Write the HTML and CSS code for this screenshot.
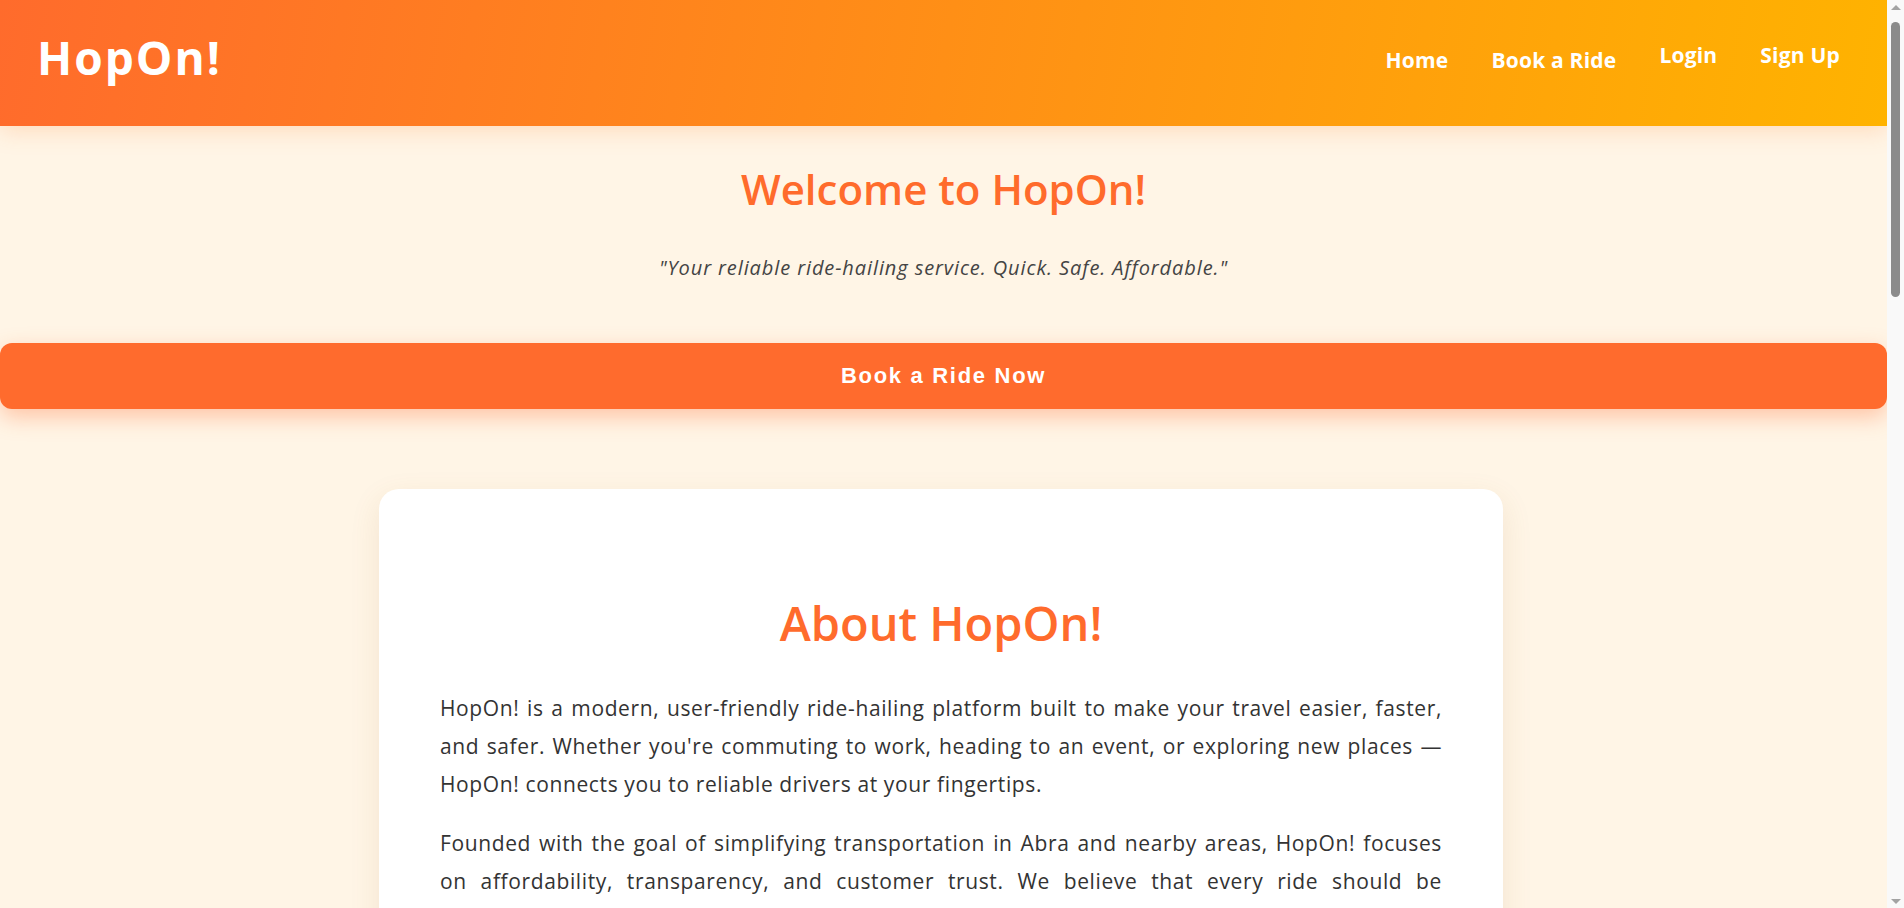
FILE: index.html
```html
<!DOCTYPE html>
<html lang="en">
<head>
<meta charset="utf-8">
<title>HopOn!</title>
<link rel="stylesheet" href="styles.css">
</head>
<body>
<header class="site-header">
  <div class="logo">HopOn!</div>
  <nav class="nav">
    <a class="nav-link" href="#">Home</a>
    <a class="nav-link" href="#">Book a Ride</a>
    <a class="nav-link nav-auth" href="#">Login</a>
    <a class="nav-link nav-auth" href="#">Sign Up</a>
  </nav>
</header>

<section class="hero">
  <h1 class="hero-title">Welcome to HopOn!</h1>
  <p class="hero-tagline">"Your reliable ride-hailing service. Quick. Safe. Affordable."</p>
  <button class="cta-button">Book a Ride Now</button>
</section>

<main class="about-wrap">
  <section class="about-card">
    <h2 class="about-title">About HopOn!</h2>
    <p class="about-text">HopOn! is a modern, user-friendly ride-hailing platform built to make your travel easier, faster, and safer. Whether you're commuting to work, heading to an event, or exploring new places — HopOn! connects you to reliable drivers at your fingertips.</p>
    <p class="about-text">Founded with the goal of simplifying transportation in Abra and nearby areas, HopOn! focuses on affordability, transparency, and customer trust. We believe that every ride should be comfortable, secure, and stress-free — from the moment you book until you arrive at your destination.</p>
    <p class="about-text">Our drivers are carefully verified and trained to provide friendly, professional service. With real-time booking, clear fare estimates, and easy account management, HopOn! puts you in control of every trip.</p>
    <p class="about-text">Join our growing community today and experience a smarter way to get around. HopOn! — your ride, your way.</p>
  </section>
</main>

<div class="scrollbar" aria-hidden="true">
  <div class="scroll-arrow scroll-up"></div>
  <div class="scroll-thumb"></div>
  <div class="scroll-spacer"></div>
  <div class="scroll-arrow scroll-down"></div>
</div>
</body>
</html>
```

FILE: styles.css
```css
* {
  box-sizing: border-box;
}

html, body {
  padding: 0;
}

html {
  margin: 0;
}

body {
  margin: 0 17px 0 0;
  background: #fff5e6;
  font-family: "Open Sans", "Noto Sans", sans-serif;
  color: #333;
}

.site-header {
  height: 126px;
  padding: 0 47px 0 37px;
  display: flex;
  align-items: center;
  justify-content: space-between;
  background: linear-gradient(100deg, #ff6b2c 0%, #ffb300 100%);
  box-shadow: 0 4px 22px rgba(255, 140, 60, 0.25);
  position: relative;
  z-index: 2;
}

.logo {
  color: #fff;
  font-size: 46px;
  font-weight: 700;
  line-height: 1.2;
  letter-spacing: 2px;
  margin-bottom: 10px;
}

.nav {
  display: flex;
  align-items: center;
  gap: 43px;
}

.nav-link {
  color: #fff;
  text-decoration: none;
  font-size: 21px;
  font-weight: 700;
  letter-spacing: 0.2px;
  line-height: 24px;
  margin-bottom: 6px;
}

.nav-link.nav-auth {
  margin-bottom: 16px;
}

.hero {
  text-align: center;
  padding-top: 38px;
}

.hero-title {
  margin: 0;
  color: #ff6b2c;
  font-size: 42px;
  font-weight: 600;
  line-height: 1.2;
}

.hero-tagline {
  margin: 40px 0 0;
  font-size: 20px;
  line-height: 28.5px;
  letter-spacing: 0.9px;
  font-style: italic;
  color: #444;
}

.cta-button {
  display: block;
  width: 100%;
  height: 66px;
  margin-top: 60px;
  border: none;
  border-radius: 12px;
  background: #ff6b2d;
  color: #fff;
  font-family: "Liberation Sans", Arial, sans-serif;
  font-size: 22px;
  font-weight: 700;
  letter-spacing: 1.7px;
  box-shadow: 0 8px 22px rgba(255, 107, 45, 0.35);
  cursor: pointer;
}

.about-wrap {
  display: flex;
  justify-content: center;
  padding: 80px 5px 60px 0;
}

.about-card {
  width: 1124px;
  background: #fff;
  border-radius: 20px;
  padding: 107px 61px 60px;
  box-shadow: 0 10px 30px rgba(160, 110, 40, 0.12);
}

.about-title {
  margin: 0 0 39px;
  text-align: center;
  color: #ff6b2c;
  font-size: 47px;
  font-weight: 600;
  line-height: 54px;
}

.about-text {
  margin: 0 0 21px;
  font-size: 21px;
  letter-spacing: 0.62px;
  line-height: 38px;
  text-align: justify;
  color: #333;
}

.scrollbar {
  position: fixed;
  top: 0;
  right: 0;
  width: 17px;
  height: 100vh;
  background: #f9f9f9;
  display: flex;
  flex-direction: column;
  align-items: center;
  z-index: 10;
}

.scroll-arrow {
  width: 0;
  height: 0;
  border-left: 5px solid transparent;
  border-right: 5px solid transparent;
}

.scroll-up {
  margin-top: 5px;
  border-bottom: 5px solid #a3a3a3;
}

.scroll-down {
  margin-bottom: 4px;
  border-top: 5px solid #a3a3a3;
}

.scroll-thumb {
  width: 9px;
  height: 275px;
  margin-top: 12px;
  border-radius: 5px;
  background: #8b8b8b;
}

.scroll-spacer {
  flex: 1;
}
```
